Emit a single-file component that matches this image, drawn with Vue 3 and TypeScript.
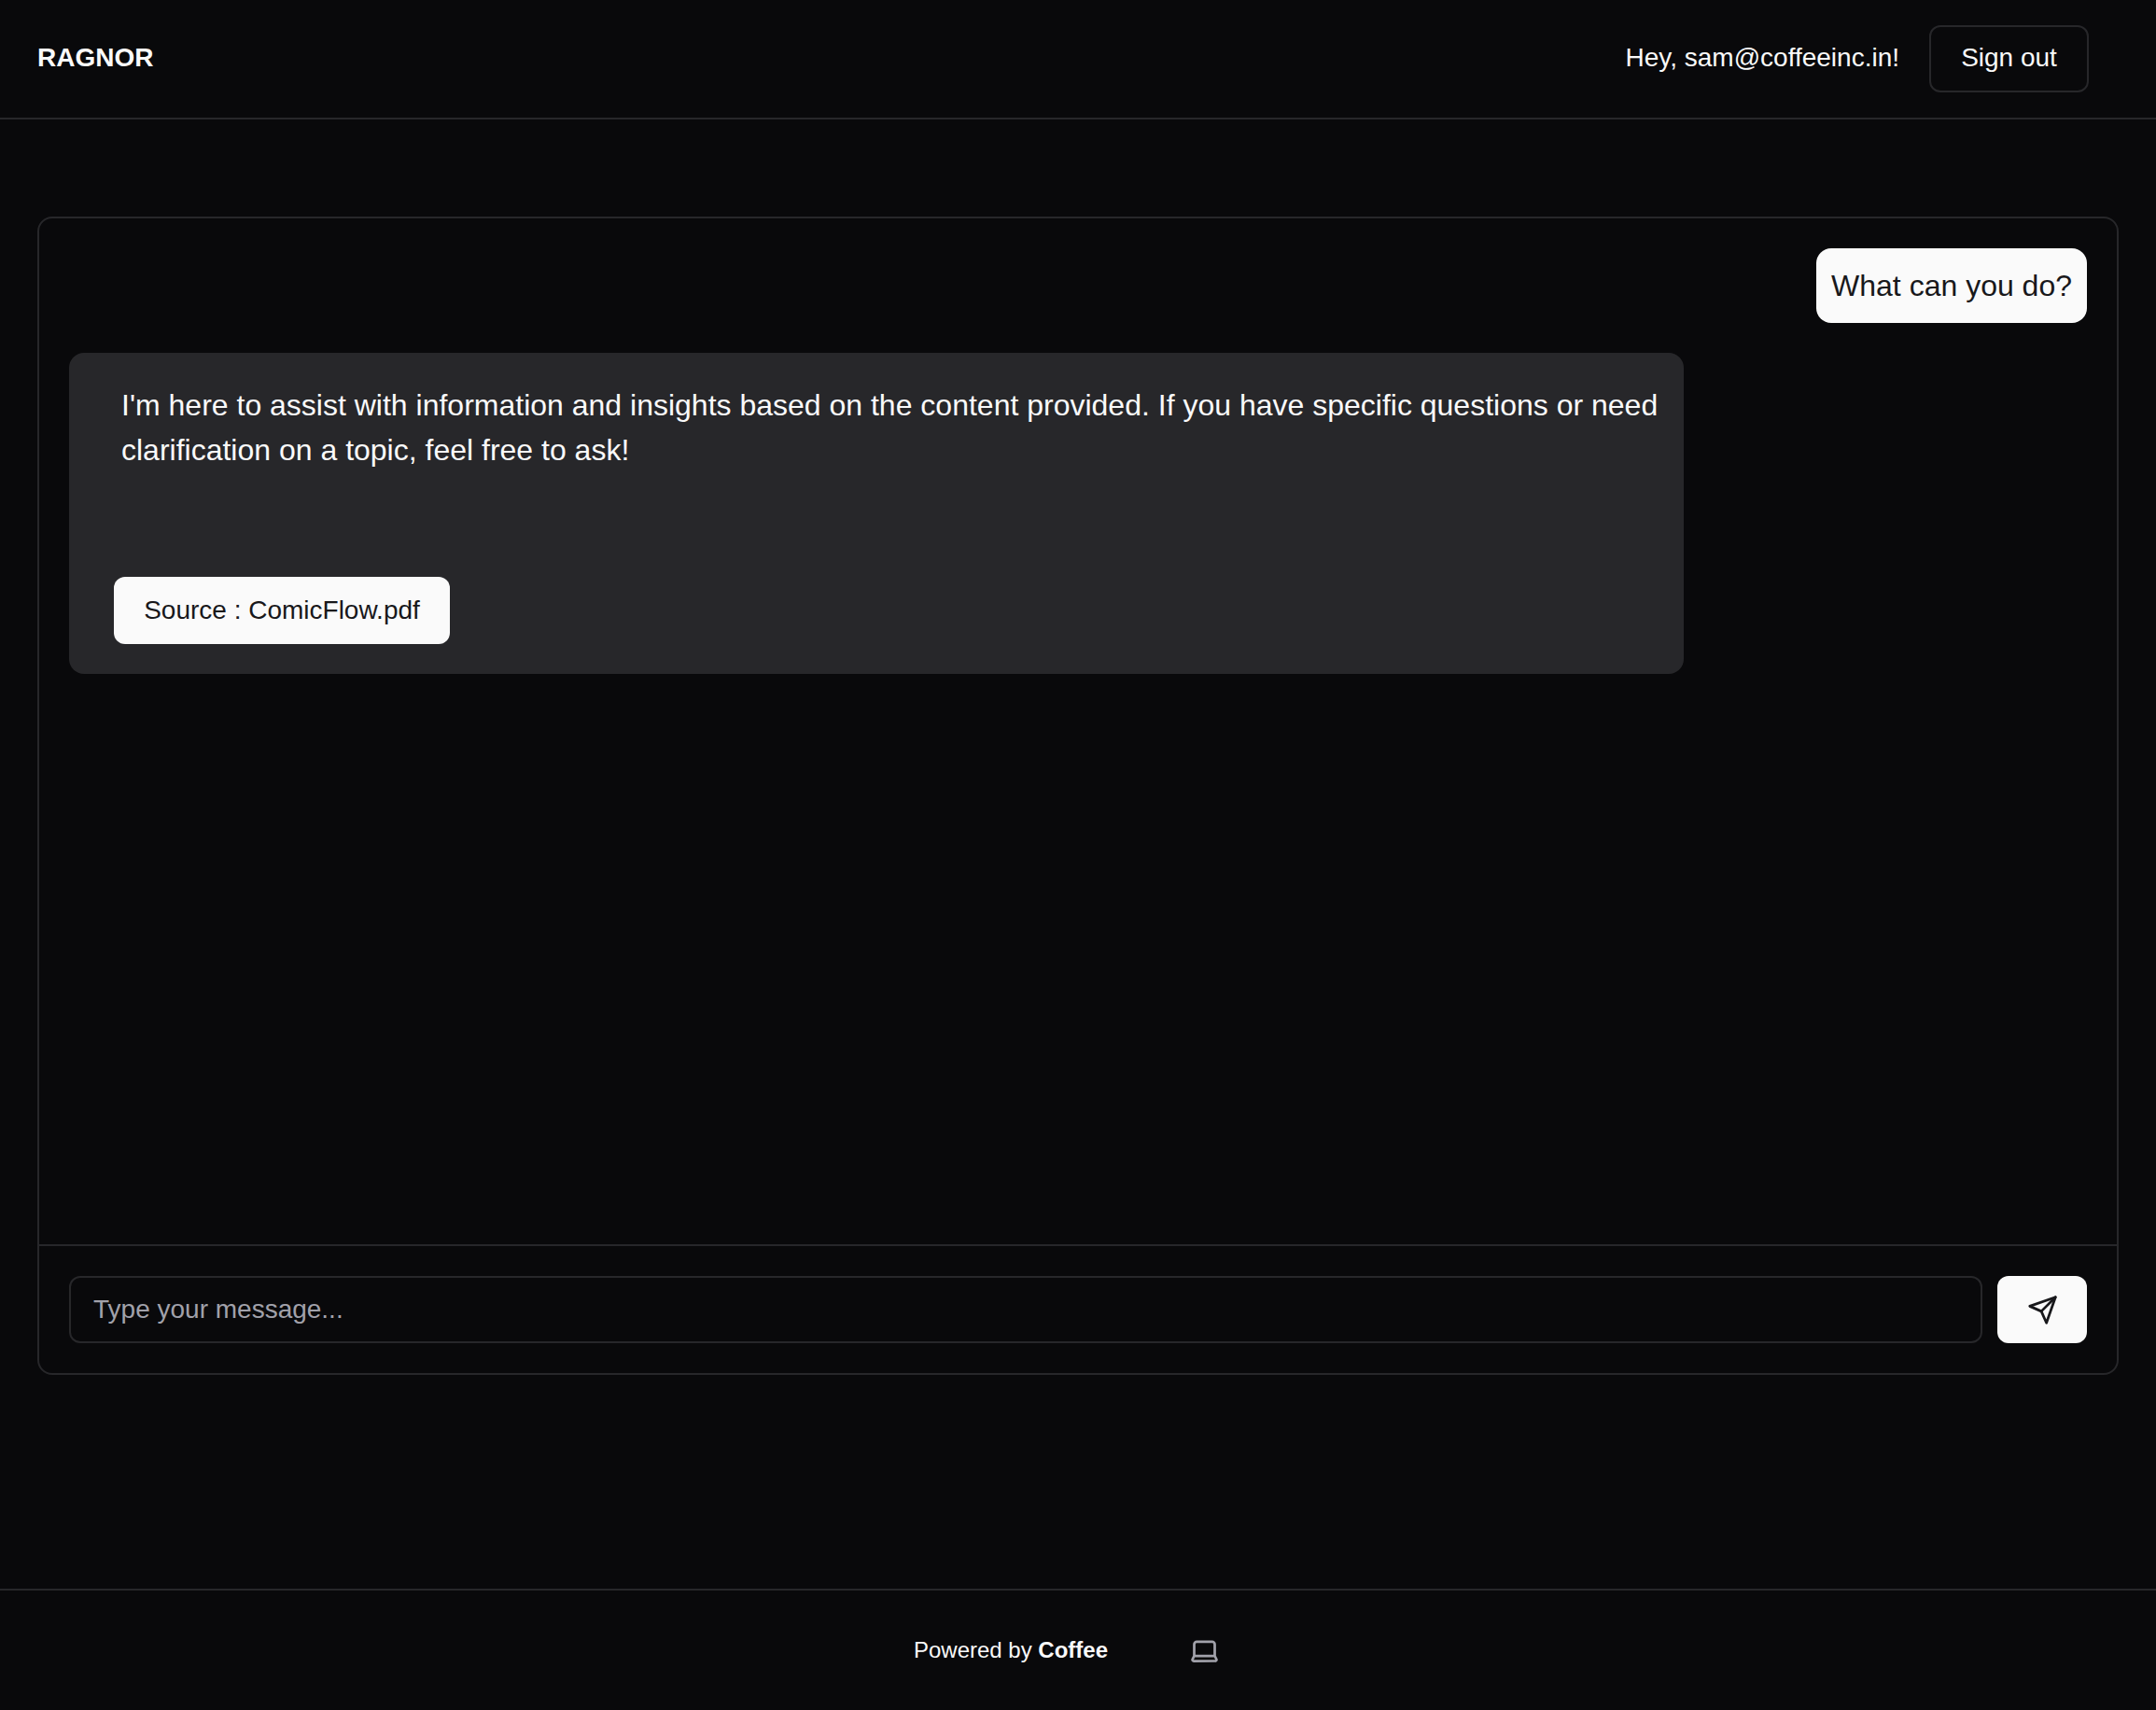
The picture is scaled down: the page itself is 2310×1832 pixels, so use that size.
<script setup lang="ts">
const userEmail: string = 'sam@coffeeinc.in'
</script>

<template>
  <div class="page">
    <header class="topbar">
      <div class="brand">RAGNOR</div>
      <div class="account">
        <span class="greeting">Hey, {{ userEmail }}!</span>
        <button class="signout" type="button">Sign out</button>
      </div>
    </header>

    <main class="main">
      <section class="card">
        <div class="messages">
          <div class="bubble-user">What can you do?</div>
          <div class="bubble-bot">
            <p class="answer">I'm here to assist with information and insights based on the content provided. If you have specific questions or need clarification on a topic, feel free to ask!</p>
            <button class="source" type="button">Source : ComicFlow.pdf</button>
          </div>
        </div>
        <form class="composer" @submit.prevent>
          <input class="field" type="text" placeholder="Type your message..." />
          <button class="send" type="submit" aria-label="Send">
            <svg width="33" height="33" viewBox="0 0 24 24" fill="none" stroke="currentColor" stroke-width="2" stroke-linecap="round" stroke-linejoin="round">
              <path d="m22 2-7 20-4-9-9-4Z" />
              <path d="M22 2 11 13" />
            </svg>
          </button>
        </form>
      </section>
    </main>

    <footer class="footer">
      <span class="powered">Powered by <strong>Coffee</strong></span>
      <svg class="laptop" width="33" height="33" viewBox="0 0 24 24" fill="none" stroke="currentColor" stroke-width="2" stroke-linecap="round" stroke-linejoin="round">
        <path d="M20 16V7a2 2 0 0 0-2-2H6a2 2 0 0 0-2 2v9m16 0H4m16 0 1.28 2.55a1 1 0 0 1-.9 1.45H3.62a1 1 0 0 1-.9-1.45L4 16" />
      </svg>
    </footer>
  </div>
</template>

<style>
html, body { margin: 0; background: #09090b; }
</style>

<style scoped>
.page {
  width: 2310px;
  height: 1832px;
  display: flex;
  flex-direction: column;
  box-sizing: border-box;
  background: #09090b;
  color: #fafafa;
  font-family: "Liberation Sans", Arial, sans-serif;
}
.topbar {
  height: 128px;
  flex: none;
  box-sizing: border-box;
  border-bottom: 2px solid #27272a;
  display: flex;
  align-items: center;
  justify-content: space-between;
  padding: 0 72px 0 40px;
}
.brand { font-size: 28px; font-weight: 700; margin-bottom: 2px; }
.account { display: flex; align-items: center; gap: 32px; }
.greeting { font-size: 28px; margin-bottom: 2px; }
.signout {
  width: 171px;
  height: 72px;
  box-sizing: border-box;
  background: #09090b;
  color: #fafafa;
  border: 2px solid #27272a;
  border-radius: 12px;
  padding: 0 0 2px;
  font: 28px "Liberation Sans", Arial, sans-serif;
}
.main { flex: 1; padding: 104px 40px 0; box-sizing: border-box; }
.card {
  width: 2230px;
  height: 1241px;
  box-sizing: border-box;
  border: 2px solid #27272a;
  border-radius: 16px;
  display: flex;
  flex-direction: column;
}
.messages {
  flex: 1;
  padding: 32px 32px 0;
  display: flex;
  flex-direction: column;
  gap: 32px;
}
.bubble-user {
  align-self: flex-end;
  height: 80px;
  line-height: 80px;
  padding: 0 16px;
  border-radius: 16px;
  background: #fafafa;
  color: #18181b;
  font-size: 32px;
}
.bubble-bot {
  width: 1730px;
  height: 344px;
  box-sizing: border-box;
  background: #27272a;
  border-radius: 16px;
  padding: 32px 24px 32px 48px;
  display: flex;
  flex-direction: column;
  align-items: flex-start;
  justify-content: space-between;
}
.answer { margin: 0 0 0 8px; font-size: 32px; line-height: 48px; color: #fafafa; }
.source {
  height: 72px;
  width: 360px;
  border: 0;
  border-radius: 12px;
  background: #fafafa;
  color: #18181b;
  font: 28px "Liberation Sans", Arial, sans-serif;
}
.composer {
  height: 138px;
  flex: none;
  box-sizing: border-box;
  border-top: 2px solid #27272a;
  padding: 32px;
  display: flex;
  gap: 16px;
}
.field {
  flex: 1;
  min-width: 0;
  height: 72px;
  box-sizing: border-box;
  background: transparent;
  border: 2px solid #27272a;
  border-radius: 12px;
  padding: 0 24px;
  font: 28px "Liberation Sans", Arial, sans-serif;
  color: #fafafa;
}
.field::placeholder { color: #a1a1aa; opacity: 1; }
.send {
  width: 96px;
  height: 72px;
  border: 0;
  border-radius: 12px;
  background: #fafafa;
  color: #18181b;
  display: flex;
  align-items: center;
  justify-content: center;
  padding: 0;
}
.footer {
  height: 130px;
  flex: none;
  box-sizing: border-box;
  border-top: 2px solid #27272a;
  display: flex;
  align-items: center;
  justify-content: center;
  gap: 87px;
  padding-right: 24px;
}
.powered { font-size: 24px; }
.laptop { color: #a1a1aa; }
</style>
